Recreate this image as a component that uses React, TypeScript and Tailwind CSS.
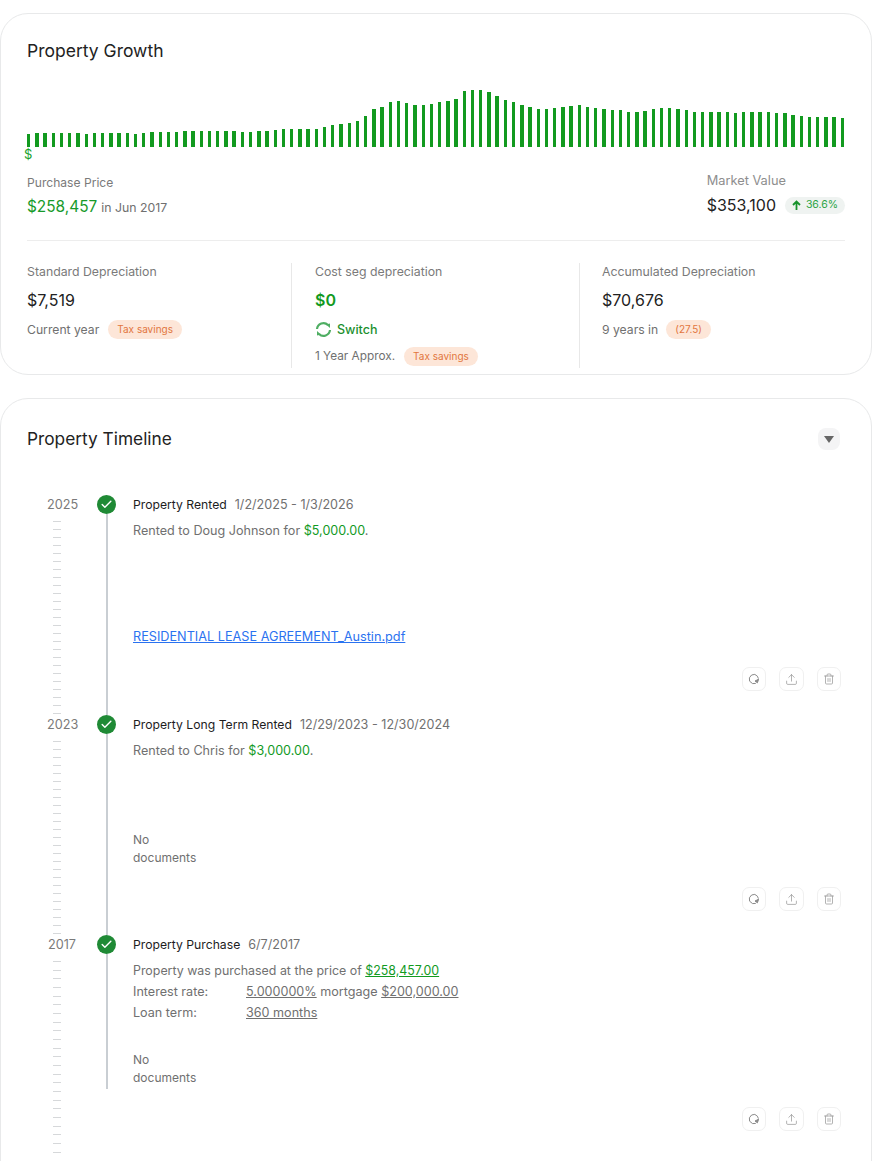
import { Check, Upload, Trash2 } from "lucide-react";

const bars = [
  13, 14, 14, 14, 14, 14, 14, 13, 14, 14, 14, 14, 14, 13, 14, 15, 15, 15, 15, 16, 16, 16, 16, 16, 16, 16, 15, 15, 16,
  16, 17, 18, 18, 18, 18, 18, 20, 22, 23, 24, 26, 31, 38, 40, 45, 46, 44, 42, 42, 43, 45, 46, 48, 56, 57, 57, 55, 51,
  47, 45, 42, 40, 38, 38, 39, 40, 41, 42, 40, 39, 38, 37, 37, 35, 35, 36, 38, 39, 39, 38, 37, 35, 35, 35, 35, 35, 34,
  35, 35, 35, 35, 34, 34, 32, 31, 30, 30, 30, 30, 29,
];

function Ticks({ count, className }: { count: number; className: string }) {
  return (
    <div className={`flex flex-col justify-between ${className}`}>
      {Array.from({ length: count }).map((_, i) => (
        <div key={i} className="h-px w-[8px] bg-[#d6d8da]" />
      ))}
    </div>
  );
}

function ActionIcons() {
  return (
    <div className="flex justify-end gap-[13px]">
      <button className="flex h-[24px] w-[24px] items-center justify-center rounded-[7px] border border-[#f0f0f0] text-[#8a8a8a]">
        <svg width="12" height="12" viewBox="0 0 12 12" fill="none" stroke="currentColor" strokeWidth="1">
          <path d="M7.8 10.4 4.6 10.6 1.6 8.2 1.4 4.8 3.6 2 6.8 1.4 9.4 3.2 10.4 5.6" strokeLinejoin="round" />
          <path d="M7 8 10.6 6.2 9.4 9.8Z" fill="currentColor" />
        </svg>
      </button>
      <button className="flex h-[24px] w-[25px] items-center justify-center rounded-[7px] border border-[#f0f0f0] text-[#8a8a8a]">
        <Upload size={13} strokeWidth={1.2} />
      </button>
      <button className="flex h-[24px] w-[24px] items-center justify-center rounded-[7px] border border-[#f0f0f0] text-[#999]">
        <Trash2 size={12} strokeWidth={1.5} />
      </button>
    </div>
  );
}

function TimelineRow({
  year,
  tickCount,
  tickHeight,
  lineHeight,
  children,
}: {
  year: string;
  tickCount: number;
  tickHeight: string;
  lineHeight: string;
  children: React.ReactNode;
}) {
  return (
    <div className="flex h-[220px]">
      <div className="w-[50px] pl-[20px]">
        <div className="h-[19px] w-[30px] text-center text-[12.7px] leading-[19px] text-[#7a7a7a]">{year}</div>
        <Ticks count={tickCount} className={`ml-[6px] mt-[7px] ${tickHeight}`} />
      </div>
      <div className="ml-[20px] flex w-[19px] flex-col">
        <div className="flex h-[19px] w-[19px] items-center justify-center rounded-full bg-[#1f8a35]">
          <Check size={13} strokeWidth={2.6} className="text-white" />
        </div>
        <div className={`ml-[9px] w-[2px] bg-[#c9ced3] ${lineHeight}`} />
      </div>
      <div className="ml-[17px] flex w-[708px] flex-col">{children}</div>
    </div>
  );
}

function Title({ name, date }: { name: string; date: string }) {
  return (
    <div className="flex h-[19px] items-center gap-[8px] leading-[19px]">
      <span className="text-[12.2px] text-[#1d1d1d]">{name}</span>
      <span className="text-[12.6px] text-[#707070]">{date}</span>
    </div>
  );
}

function NoDocs() {
  return (
    <div className="w-[70px] text-[12px] leading-[18px] text-[#707070]">
      No
      <br />
      documents
    </div>
  );
}

function TaxBadge({ text }: { text: string }) {
  return (
    <span className="rounded-full bg-[#fde6d8] px-[9px] text-[10px] leading-[19px] text-[#e2763f]">{text}</span>
  );
}

export default function App() {
  return (
    <div
      className="h-[1161px] w-[878px] overflow-hidden bg-white pr-[6px] pt-[13px]"
      style={{ fontFamily: "Inter, 'Liberation Sans', sans-serif" }}
    >
      {/* Growth card */}
      <div className="h-[362px] rounded-[28px] border border-[#e8e9ea] px-[26px] pt-[25px]">
        <h2 className="text-[17.5px] leading-[24px] text-[#222]">Property Growth</h2>

        <div className="mt-[27px] flex h-[57px] items-end justify-between">
          {bars.map((h, i) => (
            <div key={i} className="w-[3.4px] bg-[#129a1f]" style={{ height: h }} />
          ))}
        </div>
        <div className="-ml-[3px] text-[13px] leading-[14px] text-[#17a12a]">$</div>

        <div className="mt-[1px] flex h-[72px] items-start justify-between">
          <div className="pt-[12px]">
            <div className="text-[12.1px] leading-[18px] text-[#7a7a7a]">Purchase Price</div>
            <div className="mt-[4px] flex items-baseline gap-[4px]">
              <span className="text-[15.4px] leading-[22px] text-[#179a2a]">$258,457</span>
              <span className="text-[12.3px] text-[#707070]">in Jun 2017</span>
            </div>
          </div>
          <div className="pt-[10px]">
            <div className="text-[12.8px] leading-[18px] text-[#8e8e8e]">Market Value</div>
            <div className="mt-[4px] flex items-center gap-[9px]">
              <span className="text-[16px] leading-[22px] text-[#222]">$353,100</span>
              <span className="flex h-[17px] w-[60px] items-center justify-center gap-[5px] rounded-full bg-[#eff3f1] text-[10.5px] text-[#2aa344]">
                <svg width="9" height="10" viewBox="0 0 9 10" fill="none" stroke="#17922c" strokeWidth="1.8">
                  <path d="M4.5 10V1.5M1 5l3.5-3.5L8 5" />
                </svg>
                36.6%
              </span>
            </div>
          </div>
        </div>

        <div className="mt-[6px] h-px bg-[#ededed]" />

        <div className="mt-[22px] flex h-[105px]">
          <div className="w-[265px] border-r border-[#e8e8e8]">
            <div className="text-[12.3px] leading-[18px] text-[#7a7a7a]">Standard Depreciation</div>
            <div className="mt-[8px] text-[16px] leading-[22px] text-[#222]">$7,519</div>
            <div className="mt-[9px] flex items-center gap-[9px] text-[12.2px] leading-[19px] text-[#707070]">
              Current year <TaxBadge text="Tax savings" />
            </div>
          </div>
          <div className="w-[288px] border-r border-[#e8e8e8] pl-[23px]">
            <div className="text-[12.3px] leading-[18px] text-[#7a7a7a]">Cost seg depreciation</div>
            <div className="mt-[8px] text-[16px] font-semibold leading-[22px] text-[#129a1f]">$0</div>
            <div className="mt-[9px] flex items-center gap-[5px] text-[12.5px] font-medium leading-[19px] text-[#1b8f2e]">
              <svg width="17" height="17" viewBox="0 0 17 17" fill="none" stroke="#4fae63" strokeWidth="2.2">
                <path d="M2 8a6.5 6.5 0 0 1 11-4" />
                <path d="M15 9a6.5 6.5 0 0 1-11 4" />
                <path d="M11 3.5 15 7V2.5Z" fill="#4fae63" strokeWidth="0" />
                <path d="M6 13.5 2 10v4.5Z" fill="#4fae63" strokeWidth="0" />
              </svg>
              Switch
            </div>
            <div className="mt-[8px] flex items-center gap-[9px] text-[11.8px] leading-[19px] text-[#707070]">
              1 Year Approx. <TaxBadge text="Tax savings" />
            </div>
          </div>
          <div className="pl-[22px]">
            <div className="text-[12.3px] leading-[18px] text-[#7a7a7a]">Accumulated Depreciation</div>
            <div className="mt-[8px] text-[16px] leading-[22px] text-[#222]">$70,676</div>
            <div className="mt-[9px] flex items-center gap-[8px] text-[12.2px] leading-[19px] text-[#707070]">
              9 years in <TaxBadge text="(27.5)" />
            </div>
          </div>
        </div>
      </div>

      {/* Timeline card */}
      <div className="mt-[23px] h-[800px] rounded-[28px] border border-[#e8e9ea] pl-[26px] pt-[28px]">
        <div className="flex h-[24px] items-center justify-between pr-[31px]">
          <h2 className="text-[17.3px] leading-[24px] text-[#222]">Property Timeline</h2>
          <div className="flex h-[22px] w-[22px] items-center justify-center rounded-[8px] bg-[#f4f4f5]">
            <svg width="10" height="7" viewBox="0 0 10 7">
              <path d="M0 0h10L5 7Z" fill="#666" />
            </svg>
          </div>
        </div>

        <div className="mt-[44px]">
          <TimelineRow year="2025" tickCount={25} tickHeight="h-[193px]" lineHeight="h-[201px]">
            <Title name="Property Rented" date="1/2/2025 - 1/3/2026" />
            <p className="mt-[7px] text-[12.6px] leading-[19px] text-[#707070]">
              Rented to Doug Johnson for <span className="text-[#129a1f]">$5,000.00</span>.
            </p>
            <a className="mt-[87px] text-[12.7px] leading-[19px] text-[#2a72f0] underline">
              RESIDENTIAL LEASE AGREEMENT_Austin.pdf
            </a>
            <div className="mt-[21px]">
              <ActionIcons />
            </div>
          </TimelineRow>

          <TimelineRow year="2023" tickCount={25} tickHeight="h-[193px]" lineHeight="h-[201px]">
            <Title name="Property Long Term Rented" date="12/29/2023 - 12/30/2024" />
            <p className="mt-[7px] text-[12.6px] leading-[19px] text-[#707070]">
              Rented to Chris for <span className="text-[#129a1f]">$3,000.00</span>.
            </p>
            <div className="mt-[71px]">
              <NoDocs />
            </div>
            <div className="mt-[20px]">
              <ActionIcons />
            </div>
          </TimelineRow>

          <TimelineRow year="2017" tickCount={23} tickHeight="h-[192px]" lineHeight="h-[135px]">
            <Title name="Property Purchase" date="6/7/2017" />
            <p className="mt-[7px] text-[12.4px] leading-[19px] text-[#707070]">
              Property was purchased at the price of <span className="text-[#129a1f] underline">$258,457.00</span>
            </p>
            <div className="mt-[2px] flex text-[12.6px] leading-[19px] text-[#707070]">
              <span className="w-[113px]">Interest rate:</span>
              <span>
                <span className="underline">5.000000%</span> mortgage <span className="underline">$200,000.00</span>
              </span>
            </div>
            <div className="mt-[2px] flex text-[12.6px] leading-[19px] text-[#707070]">
              <span className="w-[113px]">Loan term:</span>
              <span className="underline">360 months</span>
            </div>
            <div className="mt-[29px]">
              <NoDocs />
            </div>
            <div className="mt-[20px]">
              <ActionIcons />
            </div>
          </TimelineRow>
        </div>
      </div>
    </div>
  );
}
